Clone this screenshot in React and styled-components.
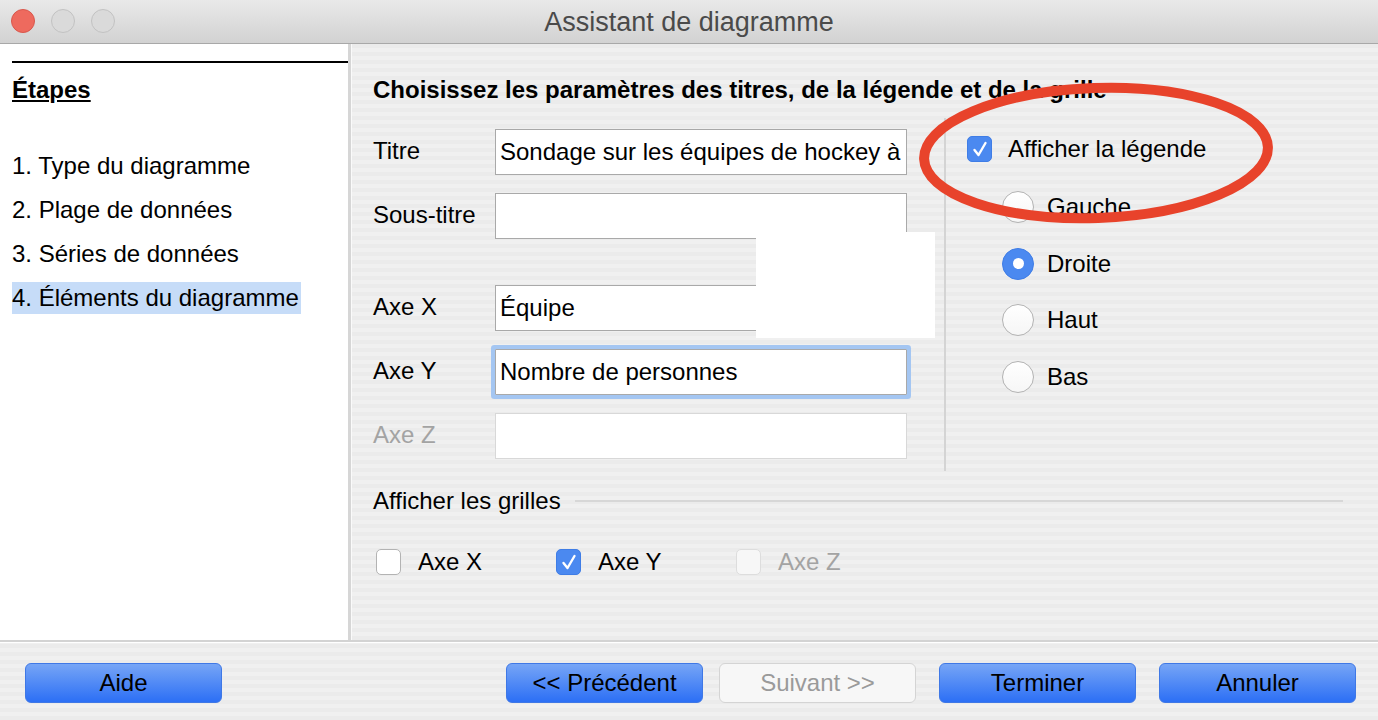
import React from 'react';
import styled, { createGlobalStyle } from 'styled-components';

const GlobalStyle = createGlobalStyle`
  html, body {
    margin: 0;
    padding: 0;
  }
  body {
    font-family: "Liberation Sans", Arial, sans-serif;
    color: #000;
  }
`;

const stripes = `repeating-linear-gradient(180deg, #f0f0f0 0px, #f0f0f0 4px, #ebebeb 4px, #ebebeb 8px)`;

const Window = styled.div`
  position: relative;
  display: flex;
  flex-direction: column;
  width: 1378px;
  height: 720px;
  overflow: hidden;
  background: ${stripes};
`;

const TitleBar = styled.div`
  position: relative;
  display: flex;
  align-items: center;
  justify-content: center;
  height: 43px;
  background: linear-gradient(180deg, #e9e9e9 0%, #d2d2d2 100%);
  border-bottom: 1px solid #a8a8a8;
  flex-shrink: 0;
`;

const Lights = styled.div`
  position: absolute;
  left: 11px;
  top: 9px;
  display: flex;
  gap: 16px;
`;

const Light = styled.span`
  width: 24px;
  height: 24px;
  box-sizing: border-box;
  border-radius: 50%;
  background: ${({ $red }) => ($red ? '#ee6a5e' : '#dadada')};
  border: 1px solid ${({ $red }) => ($red ? '#d9574c' : '#c2c2c2')};
`;

const WindowTitle = styled.div`
  font-size: 27px;
  padding-top: 2px;
  color: #4a4a4a;
`;

const Body = styled.div`
  display: flex;
  flex: 1;
  min-height: 0;
`;

const Sidebar = styled.div`
  width: 351px;
  flex-shrink: 0;
  background: #fff;
  padding: 17px 0 0 12px;
  box-sizing: border-box;
  border-right: 3px solid #d6d6d6;
`;

const SideInner = styled.div`
  border-top: 2px solid #000;
`;

const SideTitle = styled.div`
  margin-top: 13px;
  font-size: 24px;
  line-height: 28px;
  font-weight: bold;
  text-decoration: underline;
`;

const StepList = styled.div`
  display: flex;
  flex-direction: column;
  align-items: flex-start;
  gap: 12px;
  margin-top: 46px;
`;

const Step = styled.div`
  font-size: 24px;
  line-height: 32px;
  padding-right: 2px;
  background: ${({ $active }) => ($active ? '#c6dcf8' : 'transparent')};
`;

const Main = styled.div`
  flex: 1;
  padding: 32px 35px 0 21px;
  box-sizing: border-box;
  border-left: 1px solid #fafafa;
`;

const Heading = styled.div`
  font-size: 24px;
  line-height: 28px;
  font-weight: bold;
  white-space: nowrap;
`;

const FormArea = styled.div`
  display: flex;
  margin-top: 14px;
`;

const Fields = styled.div`
  width: 534px;
  padding: 11px 0 12px;
  display: flex;
  flex-direction: column;
  gap: 18px;
`;

const FieldRow = styled.div`
  display: flex;
  align-items: center;
  margin-top: ${({ $spaced }) => ($spaced ? '28px' : '0')};
`;

const Label = styled.div`
  width: 122px;
  font-size: 24px;
  padding-bottom: 3px;
  color: ${({ $disabled }) => ($disabled ? '#a3a3a3' : '#000')};
`;

const TextBox = styled.div`
  width: 412px;
  height: 46px;
  box-sizing: border-box;
  padding: 0 4px;
  display: flex;
  align-items: center;
  background: #fff;
  font-size: 24px;
  white-space: nowrap;
  overflow: hidden;
  border: 1px solid ${({ $disabled }) => ($disabled ? '#d8d8d8' : '#a9a9a9')};
  box-shadow: ${({ $focused }) => ($focused ? '0 0 0 4px #a4c6f2' : 'none')};
  border-radius: ${({ $focused }) => ($focused ? '1px' : '0')};
`;

const VRule = styled.div`
  width: 2px;
  margin-left: 37px;
  background: #d4d4d4;
`;

const Options = styled.div`
  padding: 17px 0 0 21px;
`;

const CheckRow = styled.label`
  display: flex;
  align-items: center;
  gap: 16px;
  font-size: 24px;
  color: ${({ $disabled }) => ($disabled ? '#a3a3a3' : '#000')};
`;

const Box = styled.span`
  width: 25px;
  height: 26px;
  box-sizing: border-box;
  border-radius: 5px;
  display: flex;
  align-items: center;
  justify-content: center;
  flex-shrink: 0;
  background: ${({ $checked, $disabled }) =>
    $checked ? '#4b89f0' : $disabled ? '#f7f7f7' : '#fff'};
  border: 1px solid ${({ $checked, $disabled }) =>
    $checked ? '#3f7de6' : $disabled ? '#dddddd' : '#b3b3b3'};
`;

const RadioList = styled.div`
  display: flex;
  flex-direction: column;
  gap: 24.5px;
  margin-top: 28px;
  padding-left: 35px;
`;

const RadioRow = styled.div`
  display: flex;
  align-items: center;
  gap: 13px;
  font-size: 24px;
  height: 32px;
`;

const RadioDot = styled.span`
  width: 32px;
  height: 32px;
  box-sizing: border-box;
  border-radius: 50%;
  display: flex;
  align-items: center;
  justify-content: center;
  background: ${({ $checked }) =>
    $checked ? '#4b89f0' : 'linear-gradient(180deg, #ffffff, #f6f6f6)'};
  border: 1px solid ${({ $checked }) => ($checked ? '#3f7de6' : '#b3b3b3')};

  &::after {
    content: '';
    display: ${({ $checked }) => ($checked ? 'block' : 'none')};
    width: 11px;
    height: 11px;
    border-radius: 50%;
    background: #fff;
  }
`;

const GridHeader = styled.div`
  display: flex;
  align-items: center;
  gap: 14px;
  margin-top: 16px;
  font-size: 24px;
  line-height: 28px;
`;

const HRule = styled.div`
  flex: 1;
  height: 2px;
  background: #d7d7d7;
`;

const GridChecks = styled.div`
  display: grid;
  grid-template-columns: 180px 180px 180px;
  margin-top: 33px;
  padding-left: 3px;

  & ${CheckRow} {
    gap: 17px;
  }
`;

const Footer = styled.div`
  height: 80px;
  flex-shrink: 0;
  box-sizing: border-box;
  border-top: 2px solid #d3d3d3;
  box-shadow: inset 0 1px 0 #fff;
  display: flex;
  align-items: flex-start;
  padding: 21px 22px 0 25px;
`;

const ButtonGroup = styled.div`
  display: flex;
  gap: ${({ $gap }) => $gap}px;
  margin-left: ${({ $offset }) => $offset};
`;

const Button = styled.button`
  width: 197px;
  height: 40px;
  border-radius: 6px;
  font-family: "Liberation Sans", Arial, sans-serif;
  font-size: 24px;
  padding: 0;
  cursor: pointer;
  color: ${({ disabled }) => (disabled ? '#9a9a9a' : '#000')};
  background: ${({ disabled }) =>
    disabled ? '#f7f7f7' : 'linear-gradient(180deg, #76a5f6 0%, #2c6ff5 100%)'};
  border: 1px solid ${({ disabled }) => (disabled ? '#d4d4d4' : '#3f78e6')};
`;

const Redaction = styled.div`
  position: absolute;
  left: 756px;
  top: 232px;
  width: 179px;
  height: 106px;
  background: #fff;
`;

const Annotation = styled.svg`
  position: absolute;
  left: 0;
  top: 0;
  pointer-events: none;
`;

const Check = () => (
  <svg width="18" height="18" viewBox="0 0 18 18">
    <path d="M3.5 10 L7.5 15 L14.5 3" fill="none" stroke="#fff" strokeWidth="2.4" strokeLinecap="round" strokeLinejoin="round" />
  </svg>
);

const CheckBox = ({ checked, disabled, children }) => (
  <CheckRow $disabled={disabled}>
    <Box $checked={checked} $disabled={disabled}>{checked && <Check />}</Box>
    {children}
  </CheckRow>
);

const steps = ['1. Type du diagramme', '2. Plage de données', '3. Séries de données', '4. Éléments du diagramme'];

const fields = [
  { label: 'Titre', value: 'Sondage sur les équipes de hockey à' },
  { label: 'Sous-titre', value: '' },
  { label: 'Axe X', value: 'Équipe', spaced: true },
  { label: 'Axe Y', value: 'Nombre de personnes', focused: true },
  { label: 'Axe Z', value: '', disabled: true },
];

const positions = [
  { label: 'Gauche' },
  { label: 'Droite', checked: true },
  { label: 'Haut' },
  { label: 'Bas' },
];

export default function App() {
  return (
    <>
      <GlobalStyle />
      <Window>
        <TitleBar>
          <Lights>
            <Light $red />
            <Light />
            <Light />
          </Lights>
          <WindowTitle>Assistant de diagramme</WindowTitle>
        </TitleBar>
        <Body>
          <Sidebar>
            <SideInner>
              <SideTitle>Étapes</SideTitle>
              <StepList>
                {steps.map((s, i) => (
                  <Step key={s} $active={i === 3}>{s}</Step>
                ))}
              </StepList>
            </SideInner>
          </Sidebar>
          <Main>
            <Heading>Choisissez les paramètres des titres, de la légende et de la grille</Heading>
            <FormArea>
              <Fields>
                {fields.map((f) => (
                  <FieldRow key={f.label} $spaced={f.spaced}>
                    <Label $disabled={f.disabled}>{f.label}</Label>
                    <TextBox $disabled={f.disabled} $focused={f.focused}>{f.value}</TextBox>
                  </FieldRow>
                ))}
              </Fields>
              <VRule />
              <Options>
                <CheckBox checked>Afficher la légende</CheckBox>
                <RadioList>
                  {positions.map((p) => (
                    <RadioRow key={p.label}>
                      <RadioDot $checked={p.checked} />
                      {p.label}
                    </RadioRow>
                  ))}
                </RadioList>
              </Options>
            </FormArea>
            <GridHeader>
              Afficher les grilles
              <HRule />
            </GridHeader>
            <GridChecks>
              <CheckBox>Axe X</CheckBox>
              <CheckBox checked>Axe Y</CheckBox>
              <CheckBox disabled>Axe Z</CheckBox>
            </GridChecks>
          </Main>
        </Body>
        <Footer>
          <Button>Aide</Button>
          <ButtonGroup $offset="auto" $gap={16}>
            <Button>&lt;&lt; Précédent</Button>
            <Button disabled>Suivant &gt;&gt;</Button>
          </ButtonGroup>
          <ButtonGroup $offset="23px" $gap={23}>
            <Button>Terminer</Button>
            <Button>Annuler</Button>
          </ButtonGroup>
        </Footer>
        <Redaction />
        <Annotation width="1378" height="720">
          <ellipse cx="1096" cy="153" rx="172" ry="65" fill="none" stroke="#e8432b" strokeWidth="10" transform="rotate(-2 1096 153)" />
        </Annotation>
      </Window>
    </>
  );
}
